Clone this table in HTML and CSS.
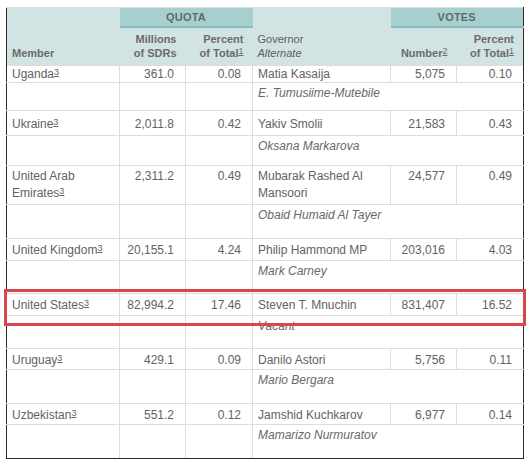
FILE: index.html
```html
<!DOCTYPE html>
<html>
<head>
<meta charset="utf-8">
<link rel="stylesheet" href="styles.css">
</head>
<body>
<div class="page">
  <table class="members">
    <colgroup>
      <col class="c-member">
      <col class="c-num">
      <col class="c-pct">
      <col class="c-gov">
      <col class="c-num">
      <col class="c-pct">
    </colgroup>
    <thead>
      <tr class="band-row">
        <th rowspan="2" class="h-left">Member</th>
        <th colspan="2" class="band">QUOTA</th>
        <th rowspan="2" class="h-left h-gov">Governor<br><i>Alternate</i></th>
        <th colspan="2" class="band">VOTES</th>
      </tr>
      <tr class="sub-row">
        <th class="h-right">Millions<br>of SDRs</th>
        <th class="h-right">Percent<br>of Total<sup>1</sup></th>
        <th class="h-right">Number<sup>2</sup></th>
        <th class="h-right">Percent<br>of Total<sup>1</sup></th>
      </tr>
    </thead>
    <tbody>
      <tr class="main m-first">
        <td>Uganda<sup>3</sup></td><td class="n">361.0</td><td class="n">0.08</td>
        <td>Matia Kasaija</td><td class="n">5,075</td><td class="n">0.10</td>
      </tr>
      <tr class="alt a-first">
        <td></td><td></td><td></td><td colspan="3" class="alt-name">E. Tumusiime-Mutebile</td>
      </tr>
      <tr class="main m-second">
        <td>Ukraine<sup>3</sup></td><td class="n">2,011.8</td><td class="n">0.42</td>
        <td>Yakiv Smolii</td><td class="n">21,583</td><td class="n">0.43</td>
      </tr>
      <tr class="alt a-second">
        <td></td><td></td><td></td><td colspan="3" class="alt-name">Oksana Markarova</td>
      </tr>
      <tr class="main m-double">
        <td>United Arab Emirates<sup>3</sup></td><td class="n">2,311.2</td><td class="n">0.49</td>
        <td>Mubarak Rashed Al Mansoori</td><td class="n">24,577</td><td class="n">0.49</td>
      </tr>
      <tr class="alt">
        <td></td><td></td><td></td><td colspan="3" class="alt-name">Obaid Humaid Al Tayer</td>
      </tr>
      <tr class="main">
        <td>United Kingdom<sup>3</sup></td><td class="n">20,155.1</td><td class="n">4.24</td>
        <td>Philip Hammond MP</td><td class="n">203,016</td><td class="n">4.03</td>
      </tr>
      <tr class="alt a-short">
        <td></td><td></td><td></td><td colspan="3" class="alt-name">Mark Carney</td>
      </tr>
      <tr class="main">
        <td>United States<sup>3</sup></td><td class="n">82,994.2</td><td class="n">17.46</td>
        <td>Steven T. Mnuchin</td><td class="n">831,407</td><td class="n">16.52</td>
      </tr>
      <tr class="alt a-short">
        <td></td><td></td><td></td><td colspan="3" class="alt-name">Vacant</td>
      </tr>
      <tr class="main m-short">
        <td>Uruguay<sup>3</sup></td><td class="n">429.1</td><td class="n">0.09</td>
        <td>Danilo Astori</td><td class="n">5,756</td><td class="n">0.11</td>
      </tr>
      <tr class="alt">
        <td></td><td></td><td></td><td colspan="3" class="alt-name">Mario Bergara</td>
      </tr>
      <tr class="main m-short">
        <td>Uzbekistan<sup>3</sup></td><td class="n">551.2</td><td class="n">0.12</td>
        <td>Jamshid Kuchkarov</td><td class="n">6,977</td><td class="n">0.14</td>
      </tr>
      <tr class="alt last">
        <td></td><td></td><td></td><td colspan="3" class="alt-name">Mamarizo Nurmuratov</td>
      </tr>
    </tbody>
  </table>
  <div class="highlight"></div>
</div>
</body>
</html>
```

FILE: styles.css
```css
html, body {
  margin: 0;
  padding: 0;
  background: #ffffff;
}

.page {
  position: relative;
  padding: 7px 6px 0 6px;
  font-family: "Liberation Sans", Arial, sans-serif;
  color: #626262;
}

.members {
  width: 517px;
  table-layout: fixed;
  border-collapse: collapse;
  border-left: 1px solid #2a2a2a;
  border-right: 1px solid #2a2a2a;
  border-bottom: 1px solid #2a2a2a;
  border-top: 1px solid #d6e2e2;
  font-size: 12px;
  line-height: 16px;
}

.c-member { width: 113px; }
.c-num { width: 66px; }
.c-pct { width: 67px; }
.c-gov { width: 138px; }

thead th {
  background: #d2e3e3;
  color: #6b6b6b;
  font-size: 11px;
  line-height: 14px;
  font-weight: bold;
  padding: 0;
}

.band-row { height: 19px; }
.sub-row { height: 39px; }

th.band {
  background: #a8cfd0;
  border-bottom: 2px solid #86bcbd;
  color: #5e6b6b;
  text-align: center;
  vertical-align: middle;
  letter-spacing: 0.2px;
}

th.h-left {
  text-align: left;
  vertical-align: bottom;
  padding: 0 0 5px 5px;
}

th.h-gov {
  font-weight: normal;
  color: #5e5e5e;
}

th.h-right {
  text-align: right;
  vertical-align: bottom;
  padding: 0 9px 5px 0;
}

sup {
  font-size: 9px;
  line-height: 0;
  vertical-align: 3px;
  text-decoration: underline;
  font-weight: normal;
}

tbody td {
  border: 1px solid #dddddd;
  padding: 3px 5px 0 5px;
  vertical-align: top;
  overflow: hidden;
}

tbody td:first-child {
  border-left: 1px solid #2a2a2a;
}

tbody td:last-child {
  border-right: 1px solid #2a2a2a;
}

tbody tr.last td {
  border-bottom: 1px solid #2a2a2a;
}

tbody td.n {
  text-align: right;
  padding-right: 11px;
}

tr.main { height: 22px; }
tr.alt { height: 34px; }
tr.m-short { height: 21px; }
tr.a-short { height: 33px; }

tr.m-first { height: 17px; }
tr.m-first td { padding-top: 1px; line-height: 15px; }
tr.a-first { height: 28px; }
tr.m-second { height: 25px; }
tr.m-second td { padding-top: 5px; }
tr.a-second { height: 30px; }
tr.m-double { height: 39px; }
tr.m-double td { padding-top: 2px; line-height: 17px; }

td.alt-name {
  font-style: italic;
  color: #686868;
  padding-top: 2px;
}

.highlight {
  position: absolute;
  left: 4px;
  top: 289px;
  width: 516px;
  height: 31px;
  border: 3px solid #d9464e;
  pointer-events: none;
}
```
